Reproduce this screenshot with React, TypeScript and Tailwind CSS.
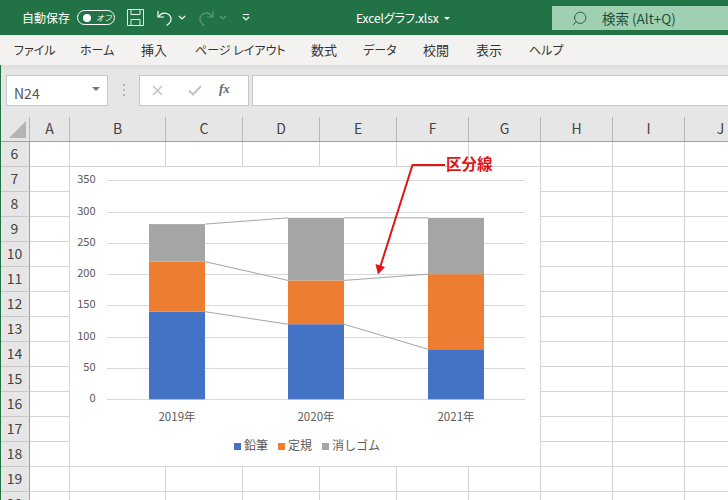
import React from 'react';
import { Search } from 'lucide-react';

const font = "font-['Noto_Sans_CJK_JP','Noto_Sans',sans-serif]";

const tabs = [
  { label: 'ファイル', cls: 'w-[66px] text-[12px]' },
  { label: 'ホーム', cls: 'w-[61px] text-[12px]' },
  { label: '挿入', cls: 'w-[54px] text-[13px]' },
  { label: 'ページ レイアウト', cls: 'w-[116px] text-[12px]' },
  { label: '数式', cls: 'w-[52px] text-[13px]' },
  { label: 'データ', cls: 'w-[60px] text-[12px]' },
  { label: '校閲', cls: 'w-[53px] text-[13px]' },
  { label: '表示', cls: 'w-[53px] text-[13px]' },
  { label: 'ヘルプ', cls: 'w-[40px] text-[12px]' },
];

const columns = [
  { name: 'A', width: 'w-[40px]' },
  { name: 'B', width: 'w-[96px]' },
  { name: 'C', width: 'w-[77px]' },
  { name: 'D', width: 'w-[77px]' },
  { name: 'E', width: 'w-[77px]' },
  { name: 'F', width: 'w-[72px]' },
  { name: 'G', width: 'w-[72px]' },
  { name: 'H', width: 'w-[72px]' },
  { name: 'I', width: 'w-[72px]' },
  { name: 'J', width: 'w-[72px]' },
];

const rows = [6, 7, 8, 9, 10, 11, 12, 13, 14, 15, 16, 17, 18, 19, 20];

// chart scale: 0 sits at y=399.3, 50 units is 31.3px
const yOf = (v: number) => 399.3 - v * 0.6257;
const ticks = [0, 50, 100, 150, 200, 250, 300, 350];

const bars = [
  { label: '2019年', x: 149, blue: 140, orange: 80, gray: 60 },
  { label: '2020年', x: 288, blue: 120, orange: 70, gray: 100 },
  { label: '2021年', x: 428, blue: 80, orange: 120, gray: 90 },
];

function TitleBar() {
  return (
    <div className="flex h-[35px] items-center whitespace-nowrap bg-[#217346] text-white">
      <span className="ml-[22px] w-[48px] shrink-0 text-[12px]">自動保存</span>
      <div className="ml-[7px] flex h-[15px] w-[38px] shrink-0 items-center rounded-full border border-white">
        <span className="ml-[5px] h-[8px] w-[8px] rounded-full bg-white" />
        <span className="ml-[5px] text-[8px] italic leading-none">オフ</span>
      </div>
      <svg width="17" height="17" viewBox="0 0 17 17" fill="none" stroke="#e6f1ea" strokeWidth="1" className="ml-[12px] shrink-0">
        <path d="M.5.5h16v16H.5z" />
        <path d="M4 .5v5h9v-5M4 16.500v-6h9v6" />
      </svg>
      <svg width="16" height="18" viewBox="0 0 16 18" fill="none" stroke="#fff" strokeWidth="1.2" className="ml-[13px] shrink-0">
        <path d="M1 2v6h6" />
        <path d="M1.500 8C3.500 4.500 7 3.500 10 4.500c3.500 1.200 5 5 3.500 8-.8 1.700-2.300 3-4 4" />
      </svg>
      <svg width="8" height="5" viewBox="0 0 8 5" fill="none" stroke="#fff" strokeWidth="1.2" className="ml-[5px] shrink-0">
        <path d="M1 1l3 3 3-3" />
      </svg>
      <svg width="16" height="18" viewBox="0 0 16 18" fill="none" stroke="#5f9c7b" strokeWidth="1.2" className="ml-[12px] shrink-0">
        <path d="M15 2v6H9" />
        <path d="M14.500 8C12.500 4.500 9 3.500 6 4.500c-3.500 1.200-5 5-3.500 8 .8 1.700 2.300 3 4 4" />
      </svg>
      <svg width="8" height="5" viewBox="0 0 8 5" fill="none" stroke="#5f9c7b" strokeWidth="1.2" className="ml-[5px] shrink-0">
        <path d="M1 1l3 3 3-3" />
      </svg>
      <svg width="8" height="7" viewBox="0 0 8 7" fill="none" stroke="#fff" strokeWidth="1.2" className="ml-[15px] shrink-0">
        <path d="M1 .5h6M1 3l3 3 3-3" />
      </svg>
      <span className="ml-[106px] w-[81px] shrink-0 text-[12px] tracking-[-0.1px] [font-feature-settings:'palt']">Excelグラフ.xlsx</span>
      <span className="ml-[7px] mt-[1px] h-0 w-0 shrink-0 border-x-[3px] border-t-[3px] border-x-transparent border-t-white" />
      <div className="absolute left-[552px] top-[6px] flex h-[24px] w-[176px] items-center bg-[#9fd0b2] text-[#1f4f36]">
        <Search size={17} strokeWidth={1.2} className="ml-[19px] -scale-x-100" />
        <span className="ml-[14px] text-[13.500px]">検索 (Alt+Q)</span>
      </div>
    </div>
  );
}

function TabBar() {
  return (
    <div className="flex h-[30px] items-center bg-[#f3f2f1] pl-[14px] text-[#333333] [font-feature-settings:'palt']">
      {tabs.map(tab => (
        <span key={tab.label} className={`${tab.cls} shrink-0 whitespace-nowrap`}>{tab.label}</span>
      ))}
    </div>
  );
}

function FormulaBar() {
  return (
    <div className="flex h-[52px] items-start bg-gradient-to-b from-[#dcdcdc] from-0% via-[#e6e6e6] via-[12%] to-[#e6e6e6] pl-[6px] pt-[10px]">
      <div className="flex h-[31px] w-[102px] items-center justify-between border border-[#c6c6c6] bg-white px-[7px] text-[14px] text-[#555555]">
        <span className="pt-[6px]">N24</span>
        <span className="mb-[3px] h-0 w-0 border-x-[4px] border-t-[4px] border-x-transparent border-t-[#777777]" />
      </div>
      <div className="ml-[15px] mt-[9px] flex flex-col gap-[3px]">
        <span className="h-[2px] w-[2px] bg-[#b5b5b5]" />
        <span className="h-[2px] w-[2px] bg-[#b5b5b5]" />
        <span className="h-[2px] w-[2px] bg-[#b5b5b5]" />
      </div>
      <div className="ml-[14px] flex h-[31px] w-[110px] items-center border border-[#c6c6c6] bg-white">
        <svg width="11" height="11" viewBox="0 0 11 11" fill="none" stroke="#c4c4c4" strokeWidth="1.6" className="ml-[12px]">
          <path d="M1 1l9 9M10 1l-9 9" />
        </svg>
        <svg width="14" height="11" viewBox="0 0 14 11" fill="none" stroke="#c4c4c4" strokeWidth="2" className="ml-[25px]">
          <path d="M1 5.500l4 4 8-8.500" />
        </svg>
        <span className="ml-[17px] mb-[3px] font-['Liberation_Serif',serif] text-[13px] font-bold italic text-[#666666]">fx</span>
      </div>
      <div className="ml-[3px] h-[31px] flex-1 border border-r-0 border-[#c6c6c6] bg-white" />
    </div>
  );
}

function SheetGrid() {
  return (
    <div className="flex-1 overflow-hidden">
      {/* column headers */}
      <div className="flex h-[25px] border-b border-[#9f9f9f] bg-[#e6e6e6] text-[14px] text-[#444444]">
        <div className="relative w-[30px] shrink-0 border-r border-[#b8b8b8]">
          <svg width="20" height="20" viewBox="0 0 20 20" className="absolute left-[8px] top-[3px]">
            <path d="M1 18L18 1v17z" fill="#b4b4b4" />
          </svg>
        </div>
        {columns.map(col => (
          <div key={col.name} className={`${col.width} flex shrink-0 items-center justify-center border-r border-[#b8b8b8] pb-[2px]`}>
            {col.name}
          </div>
        ))}
      </div>
      {rows.map(row => (
        <div key={row} className="flex h-[25px]">
          <div className="flex w-[30px] shrink-0 items-center justify-center border-b border-r border-b-[#c8c8c8] border-r-[#9f9f9f] bg-[#e6e6e6] pb-[2px] text-[14px] text-[#444444]">
            {row}
          </div>
          {columns.map(col => (
            <div key={col.name} className={`${col.width} shrink-0 border-b border-r border-[#d4d4d4] bg-white`} />
          ))}
        </div>
      ))}
    </div>
  );
}

function StackedChart() {
  const seriesLines = (key: 'blue' | 'orange' | 'gray') => {
    const tops = bars.map(b => (key === 'blue' ? b.blue : key === 'orange' ? b.blue + b.orange : b.blue + b.orange + b.gray));
    return (
      <g key={key}>
        <line x1={205} y1={yOf(tops[0])} x2={288} y2={yOf(tops[1])} stroke="#a5a5a5" />
        <line x1={344} y1={yOf(tops[1])} x2={428} y2={yOf(tops[2])} stroke="#a5a5a5" />
      </g>
    );
  };

  return (
    <svg
      width="470"
      height="299"
      viewBox="70 167 470 299"
      className="absolute left-[70px] top-[167px] bg-white"
      fontSize="11"
      fill="#595959"
    >
      {ticks.map(t => (
        <g key={t}>
          <line x1={107} x2={525} y1={Math.round(yOf(t)) + 0.5} y2={Math.round(yOf(t)) + 0.5} stroke="#d9d9d9" />
          <text x={95.500} y={yOf(t) + 3} textAnchor="end">{t}</text>
        </g>
      ))}
      {bars.map(b => (
        <g key={b.label}>
          <rect x={b.x} width={56} y={yOf(b.blue)} height={b.blue * 0.6257} fill="#4472c4" />
          <rect x={b.x} width={56} y={yOf(b.blue + b.orange)} height={b.orange * 0.6257} fill="#ed7d31" />
          <rect x={b.x} width={56} y={yOf(b.blue + b.orange + b.gray)} height={b.gray * 0.6257} fill="#a5a5a5" />
          <text x={b.x + 28} y={421} textAnchor="middle" fontSize="11.500">{b.label}</text>
        </g>
      ))}
      {seriesLines('blue')}
      {seriesLines('orange')}
      {seriesLines('gray')}
      <rect x={234} y={443} width={7} height={7} fill="#4472c4" />
      <text x={244} y={450} fontSize="12">鉛筆</text>
      <rect x={278} y={443} width={7} height={7} fill="#ed7d31" />
      <text x={288} y={450} fontSize="12">定規</text>
      <rect x={322} y={443} width={7} height={7} fill="#a5a5a5" />
      <text x={332} y={450} fontSize="12">消しゴム</text>
    </svg>
  );
}

function Callout() {
  return (
    <>
      <svg width="80" height="125" viewBox="370 155 80 125" className="absolute left-[370px] top-[155px]" fill="none">
        <path d="M445 165H412.500L380.500 266" stroke="#e01515" strokeWidth="2" />
        <path d="M378 274.500L375.500 264L385 267Z" fill="#e01515" />
      </svg>
      <span className="absolute left-[446px] top-[152px] text-[15.500px] font-bold leading-[22px] text-[#e01515]">区分線</span>
    </>
  );
}

export default function App() {
  return (
    <div className={`${font} relative flex h-[500px] w-[728px] flex-col overflow-hidden bg-white`}>
      <TitleBar />
      <TabBar />
      <FormulaBar />
      <SheetGrid />
      <StackedChart />
      <Callout />
      <div className="absolute bottom-0 left-0 top-[65px] w-[1px] bg-[#217346]" />
    </div>
  );
}
